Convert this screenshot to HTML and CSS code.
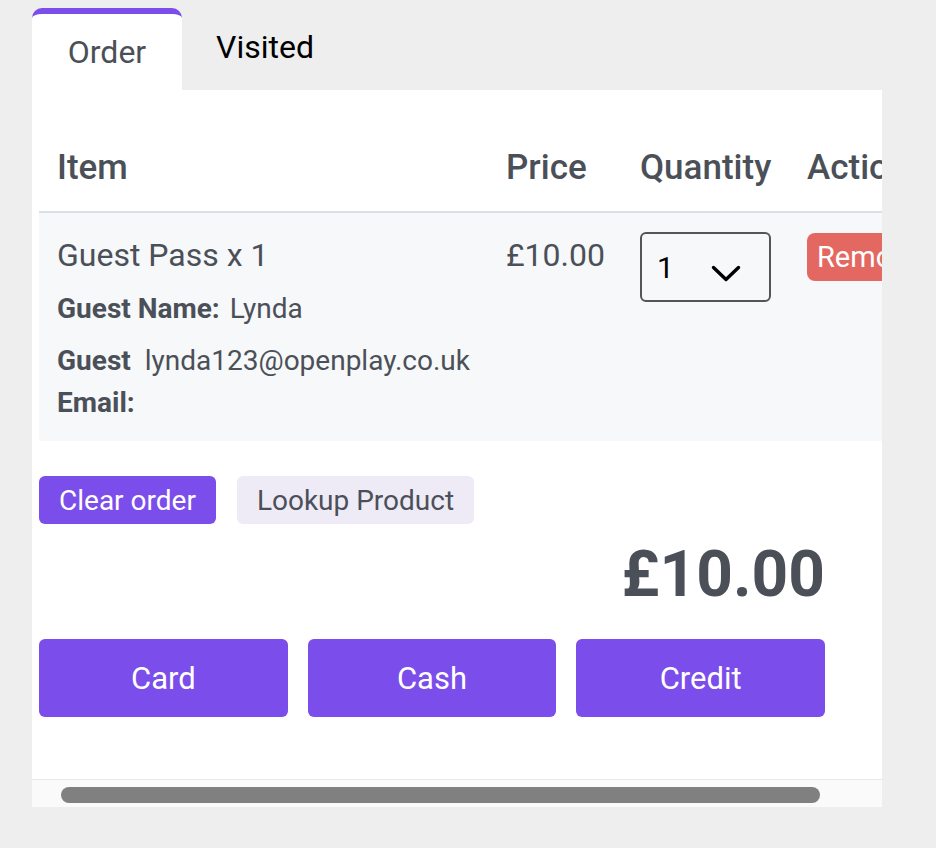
FILE: index.html
```html
<!DOCTYPE html>
<html>
<head>
<meta charset="utf-8">
<link rel="stylesheet" href="styles.css">
</head>
<body>
<div class="panel">
  <div class="tabs">
    <div class="tab active">Order</div>
    <div class="tab">Visited</div>
  </div>
  <div class="content">
    <div class="scroller">
      <div class="inner">
        <table class="order">
          <thead>
            <tr>
              <th class="c-item">Item</th>
              <th class="c-price">Price</th>
              <th class="c-qty">Quantity</th>
              <th class="c-act">Actions</th>
            </tr>
          </thead>
          <tbody>
            <tr>
              <td class="c-item">
                <div class="item-name">Guest Pass x 1</div>
                <div class="meta"><span class="label">Guest Name:</span><span class="val">Lynda</span></div>
                <div class="meta"><span class="label">Guest Email:</span><span class="val">lynda123@openplay.co.uk</span></div>
              </td>
              <td class="c-price"><div class="price">£10.00</div></td>
              <td class="c-qty">
                <div class="select"><span>1</span>
                  <svg width="30" height="17" viewBox="0 0 30 17"><path d="M2.5 2.5 L15 14.5 L27.5 2.5" fill="none" stroke="#000" stroke-width="3.4" stroke-linecap="round" stroke-linejoin="round"/></svg>
                </div>
              </td>
              <td class="c-act"><button class="remove">Remove</button></td>
            </tr>
          </tbody>
        </table>
        <div class="actions">
          <button class="btn primary">Clear order</button>
          <button class="btn light">Lookup Product</button>
        </div>
        <div class="total-row"><div class="total">£10.00</div></div>
        <div class="pay">
          <button class="paybtn">Card</button>
          <button class="paybtn">Cash</button>
          <button class="paybtn">Credit</button>
        </div>
      </div>
    </div>
    <div class="scrollbar"><div class="thumb"></div></div>
  </div>
</div>
</body>
</html>
```
FILE: styles.css
```css
* { box-sizing: border-box; }
html, body { margin: 0; }
body {
  background: #eeeeee;
  font-family: Roboto, "Liberation Sans", sans-serif;
  color: #4b5058;
  padding: 8px 0 0 32px;
  height: 848px;
}
.panel { width: 850px; }
.tabs { display: flex; height: 82px; }
.tab {
  font-size: 32px;
  color: #000;
  display: flex;
  align-items: center;
  padding: 0 33px 4px 34px;
}
.tab.active {
  width: 150px;
  justify-content: center;
  background: #fff;
  color: #4b5058;
  border-top: 6px solid #7b4dea;
  border-radius: 10px 10px 0 0;
  padding: 0;
}
.content { background: #fff; }
.scroller { overflow: hidden; }
.inner { width: 1000px; padding: 0 0 62px 7px; }
table.order { border-collapse: collapse; width: 993px; table-layout: fixed; }
th {
  text-align: left;
  font-size: 35px;
  font-weight: 500;
  line-height: 42px;
  padding: 57px 18px 22px;
  border-bottom: 2px solid #dcdfe6;
  white-space: nowrap;
}
td {
  vertical-align: top;
  background: #f7f8fa;
  padding: 22px 18px 17px;
}
.c-item { width: 449px; }
.c-price { width: 134px; }
.c-qty { width: 167px; }
.c-act { width: 243px; }
.item-name { font-size: 32px; font-weight: 400; line-height: 40px; margin-bottom: 13px; }
.meta { display: flex; gap: 10px; font-size: 28px; line-height: 42px; margin-bottom: 10px; }
.meta:last-child { margin-bottom: 0; }
.meta .label { font-weight: 700; }
.meta .val { flex-shrink: 0; }
.price { font-size: 32px; font-weight: 400; line-height: 40px; }
.select {
  width: 131px; height: 70px;
  border: 2px solid #555;
  border-radius: 6px;
  display: flex; align-items: center; justify-content: space-between;
  padding: 0 28px 0 15px;
  font-size: 30px; color: #000;
  margin-top: -3px;
}
.select svg { margin-top: 13px; }
.remove {
  font-family: inherit;
  background: #e36862;
  color: #fff;
  border: 0;
  border-radius: 8px;
  font-size: 29px;
  height: 48px;
  padding: 0 10px;
  margin-top: -2px;
  white-space: nowrap;
}
.actions { display: flex; gap: 21px; margin-top: 35px; }
.btn {
  font-family: inherit;
  border: 0;
  border-radius: 6px;
  height: 48px;
  font-size: 28px;
  padding: 0 20px;
}
.btn.primary { background: #7b4dea; color: #fff; }
.btn.light { background: #eeebf7; color: #4b5058; }
.total-row { width: 786px; display: flex; justify-content: flex-end; margin-top: 11px; }
.total { font-size: 64px; font-weight: 700; line-height: 80px; }
.pay { display: flex; gap: 20px; margin-top: 24px; width: 786px; }
.paybtn {
  font-family: inherit;
  flex: 1;
  height: 78px;
  border: 0;
  border-radius: 6px;
  background: #7b4dea;
  color: #fff;
  font-size: 31px;
}
.scrollbar {
  height: 28px;
  background: #fafafa;
  border-top: 1px solid #e8e8e8;
  padding: 7px 0 0 29px;
}
.thumb { width: 759px; height: 16px; background: #808080; border-radius: 8px; }
```
